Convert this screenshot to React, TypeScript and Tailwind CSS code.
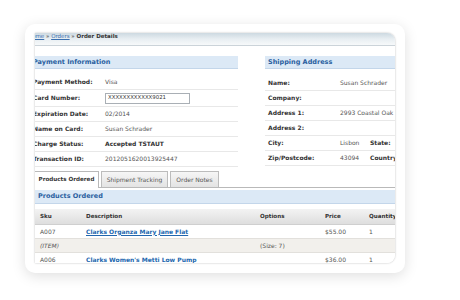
const font = "font-['DejaVu_Sans',Verdana,sans-serif]";

const payment: [string, React.ReactNode, number][] = [
  ['Payment Method:', 'Visa', 15],
  ['Card Number:', 'input', 17],
  ['Expiration Date:', '02/2014', 15],
  ['Name on Card:', 'Susan Schrader', 15],
  ['Charge Status:', <span className="font-bold text-[#333]">Accepted TSTAUT</span>, 15],
  ['Transaction ID:', '2012051620013925447', 15],
];

function PaymentRow({ label, value, h }: { label: string; value: React.ReactNode; h: number }) {
  return (
    <div className="flex items-center border-b border-[#e8e8e8]" style={{ height: h }}>
      <div className="w-[73px] shrink-0 pl-[1px] font-bold text-[#333]">{label}</div>
      {value === 'input' ? (
        <div className="flex h-[11px] w-[85px] items-center border border-[#a9afb5] bg-white pl-[2px] text-[5.4px] text-[#333]">
          XXXXXXXXXXXX9021
        </div>
      ) : (
        <div className="text-[#555]">{value}</div>
      )}
    </div>
  );
}

function ShipRow({ label, children }: { label: string; children?: React.ReactNode }) {
  return (
    <div className="flex h-[15px] items-center border-b border-[#e8e8e8]">
      <div className="w-[75px] shrink-0 pl-[3px] font-bold text-[#333]">{label}</div>
      <div className="flex items-center whitespace-nowrap text-[#555]">{children}</div>
    </div>
  );
}

function TableRow({ cells, alt, italic }: { cells: React.ReactNode[]; alt?: boolean; italic?: boolean }) {
  const widths = ['w-[51px] pl-[5px]', 'w-[174px]', 'w-[65px]', 'w-[44px]', 'w-[60px]'];
  return (
    <div className={`flex h-[14px] shrink-0 items-center border-b border-[#e2e0dc] ${alt ? 'bg-[#f2f0ec]' : 'bg-white'}`}>
      {cells.map((c, i) => (
        <div key={i} className={`${widths[i]} shrink-0 whitespace-nowrap text-[#555] ${italic && i === 0 ? 'italic' : ''}`}>
          {c}
        </div>
      ))}
    </div>
  );
}

function Link({ children }: { children: React.ReactNode }) {
  return <span className="font-bold text-[#2166ae] underline">{children}</span>;
}

export default function App() {
  return (
    <div className={`h-[300px] w-[460px] bg-white pl-[25px] pt-[24px] ${font}`}>
      <div className="h-[249px] w-[380px] rounded-[10px] bg-white pl-[10px] pt-[9px] shadow-[0_3px_14px_rgba(0,0,0,0.13)]">
        <div className="flex h-[230px] w-[360px] flex-col overflow-hidden rounded-r-[8px] bg-white text-[6px] leading-none shadow-[0_0_2px_rgba(0,0,0,0.3)]">
          {/* breadcrumb */}
          <div className="h-[13px] shrink-0 border-b border-[#cbd3d9] bg-gradient-to-b from-[#cdd9e1] via-[#e8eef2] to-[#f7f9fa]">
            <div className="-ml-[7px] mt-[1px] whitespace-nowrap text-[5.5px] text-[#555]">
              <span className="text-[#3a6fb0] underline">Home</span> » <span className="text-[#3a6fb0] underline">Orders</span> »{' '}
              <span className="font-bold text-[#333]">Order Details</span>
            </div>
          </div>

          {/* info columns */}
          <div className="mt-[10px] flex shrink-0">
            <div className="-ml-[3px] w-[206px] shrink-0">
              <div className="flex h-[13px] items-center border-b border-[#c3d6ea] bg-[#dce9f6] pl-[1px] text-[6.5px] font-bold text-[#2a5f9f]">
                Payment Information
              </div>
              <div className="mt-[6px]">
                {payment.map(([l, v, h]) => (
                  <PaymentRow key={l} label={l} value={v} h={h} />
                ))}
              </div>
            </div>
            <div className="ml-[27px] w-[200px] shrink-0">
              <div className="flex h-[13px] items-center border-b border-[#c3d6ea] bg-[#dce9f6] pl-[3px] text-[6.5px] font-bold text-[#2a5f9f]">
                Shipping Address
              </div>
              <div className="mt-[7px]">
                <ShipRow label="Name:">Susan Schrader</ShipRow>
                <ShipRow label="Company:" />
                <ShipRow label="Address 1:">2993 Coastal Oak Drive</ShipRow>
                <ShipRow label="Address 2:" />
                <ShipRow label="City:">
                  <span className="w-[30px]">Lisbon</span>
                  <span className="font-bold text-[#333]">State:</span>
                </ShipRow>
                <ShipRow label="Zip/Postcode:">
                  <span className="w-[30px]">43094</span>
                  <span className="font-bold text-[#333]">Country:</span>
                </ShipRow>
              </div>
            </div>
          </div>

          {/* tabs */}
          <div className="mt-[4px] flex h-[17px] shrink-0 items-end border-b border-[#b9b9b9]">
            <div className="-mb-px -ml-[1px] flex h-[17px] w-[65px] items-center justify-center border border-b-0 border-[#b9b9b9] bg-white text-[5.6px] font-bold text-[#333]">
              Products Ordered
            </div>
            <div className="ml-[2px] flex h-[16px] w-[67px] items-center justify-center border border-b-0 border-[#bcbcbc] bg-gradient-to-b from-[#f6f6f6] to-[#e3e3e3] text-[#555]">
              Shipment Tracking
            </div>
            <div className="ml-[2px] flex h-[16px] w-[49px] items-center justify-center border border-b-0 border-[#bcbcbc] bg-gradient-to-b from-[#f6f6f6] to-[#e3e3e3] text-[#555]">
              Order Notes
            </div>
          </div>

          <div className="mt-[2px] flex h-[14px] shrink-0 items-center border-b border-[#c3d6ea] bg-[#dce9f6] pl-[3px] text-[6.5px] font-bold text-[#2a5f9f]">
            Products Ordered
          </div>

          {/* table */}
          <div className="mt-[5px] flex h-[16px] shrink-0 items-center border-b border-[#cfcfcf] bg-gradient-to-b from-[#f3f3f3] to-[#dedede] text-[5.6px] font-bold text-[#333]">
            <div className="w-[51px] shrink-0 pl-[5px]">Sku</div>
            <div className="w-[174px] shrink-0">Description</div>
            <div className="w-[65px] shrink-0">Options</div>
            <div className="w-[44px] shrink-0">Price</div>
            <div className="w-[60px] shrink-0 whitespace-nowrap">Quantity</div>
          </div>
          <TableRow cells={['A007', <Link>Clarks Organza Mary Jane Flat</Link>, '', '$55.00', '1']} />
          <TableRow alt italic cells={['(ITEM)', '', '(Size: 7)', '', '']} />
          <TableRow cells={['A006', <Link>Clarks Women's Metti Low Pump</Link>, '', '$36.00', '1']} />
        </div>
      </div>
    </div>
  );
}
